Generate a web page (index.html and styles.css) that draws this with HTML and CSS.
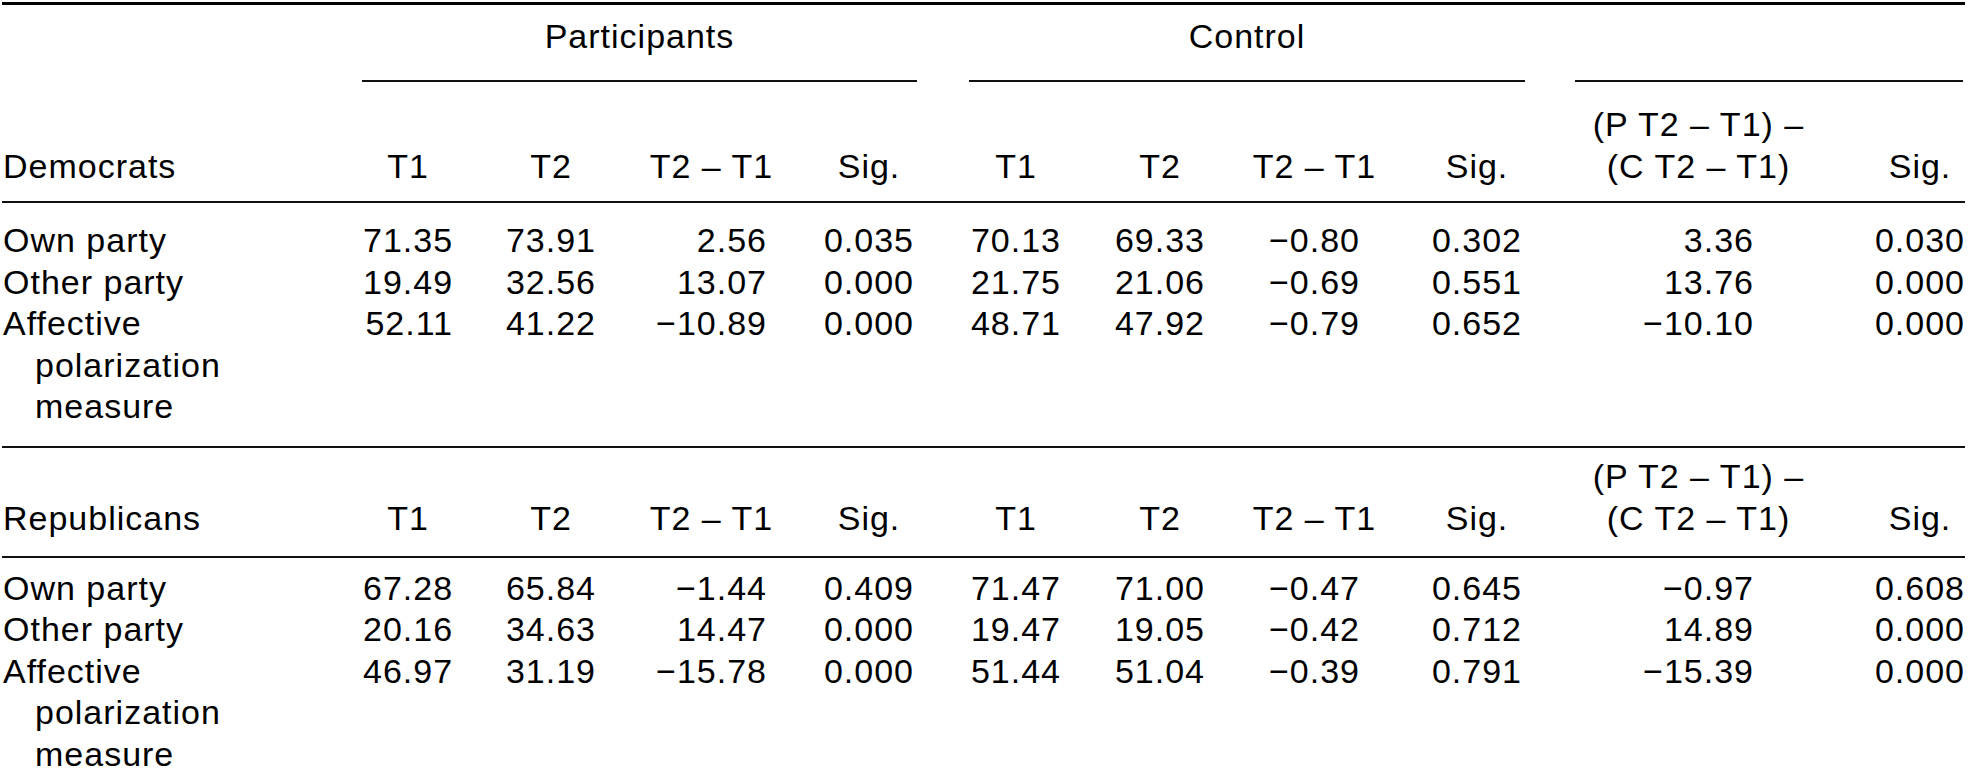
FILE: index.html
```html
<!DOCTYPE html>
<html lang="en">
<head>
<meta charset="utf-8">
<title>Affective polarization table</title>
<link rel="stylesheet" href="styles.css">
</head>
<body>
<div class="table">
  <div class="row spanners">
    <div class="spanner sp-p">Participants</div>
    <div class="spanner sp-c">Control</div>
    <div class="spanner sp-d"></div>
  </div>

  <div class="row head head-1">
    <div class="lab">Democrats</div>
    <div class="hd">T1</div>
    <div class="hd">T2</div>
    <div class="hd">T2 – T1</div>
    <div class="hd">Sig.</div>
    <div class="hd">T1</div>
    <div class="hd">T2</div>
    <div class="hd">T2 – T1</div>
    <div class="hd">Sig.</div>
    <div class="hd"><span class="stack">(P T2 – T1) –<br>(C T2 – T1)</span></div>
    <div class="hd">Sig.</div>
  </div>

  <div class="group group-1">
    <div class="row data">
      <div class="lab">Own party</div>
      <div class="n">71.35</div><div class="n">73.91</div><div class="n">2.56</div><div class="n">0.035</div>
      <div class="n">70.13</div><div class="n">69.33</div><div class="n">−0.80</div><div class="n">0.302</div>
      <div class="n">3.36</div><div class="n">0.030</div>
    </div>
    <div class="row data">
      <div class="lab">Other party</div>
      <div class="n">19.49</div><div class="n">32.56</div><div class="n">13.07</div><div class="n">0.000</div>
      <div class="n">21.75</div><div class="n">21.06</div><div class="n">−0.69</div><div class="n">0.551</div>
      <div class="n">13.76</div><div class="n">0.000</div>
    </div>
    <div class="row data">
      <div class="lab">Affective polarization measure</div>
      <div class="n">52.11</div><div class="n">41.22</div><div class="n">−10.89</div><div class="n">0.000</div>
      <div class="n">48.71</div><div class="n">47.92</div><div class="n">−0.79</div><div class="n">0.652</div>
      <div class="n">−10.10</div><div class="n">0.000</div>
    </div>
  </div>

  <div class="row head head-2">
    <div class="lab">Republicans</div>
    <div class="hd">T1</div>
    <div class="hd">T2</div>
    <div class="hd">T2 – T1</div>
    <div class="hd">Sig.</div>
    <div class="hd">T1</div>
    <div class="hd">T2</div>
    <div class="hd">T2 – T1</div>
    <div class="hd">Sig.</div>
    <div class="hd"><span class="stack">(P T2 – T1) –<br>(C T2 – T1)</span></div>
    <div class="hd">Sig.</div>
  </div>

  <div class="group group-2">
    <div class="row data">
      <div class="lab">Own party</div>
      <div class="n">67.28</div><div class="n">65.84</div><div class="n">−1.44</div><div class="n">0.409</div>
      <div class="n">71.47</div><div class="n">71.00</div><div class="n">−0.47</div><div class="n">0.645</div>
      <div class="n">−0.97</div><div class="n">0.608</div>
    </div>
    <div class="row data">
      <div class="lab">Other party</div>
      <div class="n">20.16</div><div class="n">34.63</div><div class="n">14.47</div><div class="n">0.000</div>
      <div class="n">19.47</div><div class="n">19.05</div><div class="n">−0.42</div><div class="n">0.712</div>
      <div class="n">14.89</div><div class="n">0.000</div>
    </div>
    <div class="row data">
      <div class="lab">Affective polarization measure</div>
      <div class="n">46.97</div><div class="n">31.19</div><div class="n">−15.78</div><div class="n">0.000</div>
      <div class="n">51.44</div><div class="n">51.04</div><div class="n">−0.39</div><div class="n">0.791</div>
      <div class="n">−15.39</div><div class="n">0.000</div>
    </div>
  </div>
</div>
</body>
</html>
```

FILE: styles.css
```css
:root {
  --cols: 361px 90px 143px 171px 147px 147px 144px 155px 162px 232px 211px;
  --rule: #111;
}

html, body {
  margin: 0;
  padding: 0;
  background: #fff;
}

body {
  font-family: "Liberation Sans", Arial, Helvetica, sans-serif;
  font-size: 34px;
  letter-spacing: 1px;
  line-height: 41.5px;
  color: #000;
}

.table {
  margin: 2px 0 0 2px;
  width: 1963px;
  border-top: 3px solid #000;
}

.row {
  display: grid;
  grid-template-columns: var(--cols);
}

/* spanner row */
.spanner {
  padding: 11px 0 22.5px;
  border-bottom: 2px solid var(--rule);
  text-align: center;
  white-space: nowrap;
}
.sp-p { grid-column: 2 / 6; margin: 0 -3px 0 -1px; }
.sp-c { grid-column: 6 / 10; margin: 0 -3px 0 55px; }
.sp-d { grid-column: 10 / 12; margin: 0 2px 0 53px; }

/* header rows */
.head {
  align-items: end;
  border-bottom: 2px solid var(--rule);
}
.head-1 { padding: 22px 0 14px; }
.head-2 { padding: 8px 0 17px; }

.hd {
  display: flex;
  justify-content: center;
  white-space: nowrap;
  text-align: center;
}
.stack {
  display: block;
  text-align: center;
}

/* column content boxes: header centred over the number block */
.head > :nth-child(3)  { padding-left: 53px; }
.head > :nth-child(4)  { padding-left: 60px; }
.head > :nth-child(5)  { padding-left: 57px; }
.head > :nth-child(6)  { padding-left: 57px; }
.head > :nth-child(7)  { padding-left: 54px; }
.head > :nth-child(8)  { padding-left: 64px; }
.head > :nth-child(9)  { padding-left: 72px; }
.head > :nth-child(10) { padding-left: 121px; }
.head > :nth-child(11) { padding-left: 121px; }

/* label column with hanging indent */
.lab {
  padding: 0 88px 0 33px;
  text-indent: -32px;
}

/* data groups */
.group {
  border-bottom: 2px solid var(--rule);
}
.group-1 { padding: 17px 0 18.5px; }
.group-2 { padding: 9.5px 0 0; border-bottom: 0; }

.n {
  text-align: right;
  white-space: nowrap;
}
```
